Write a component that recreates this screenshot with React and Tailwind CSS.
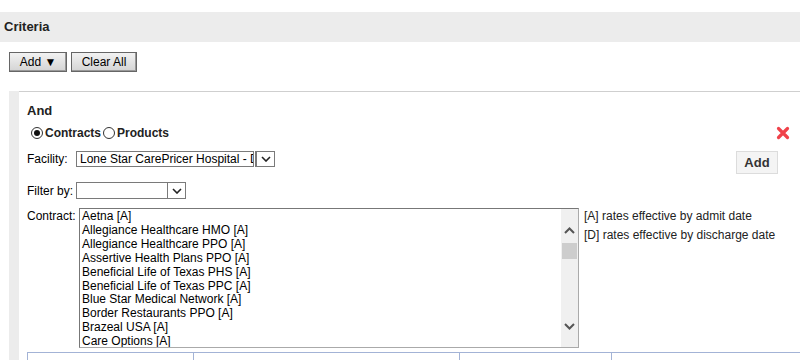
import { useState } from 'react';

const contracts = [
    'Aetna [A]',
    'Allegiance Healthcare HMO [A]',
    'Allegiance Healthcare PPO [A]',
    'Assertive Health Plans PPO [A]',
    'Beneficial Life of Texas PHS [A]',
    'Beneficial Life of Texas PPC [A]',
    'Blue Star Medical Network [A]',
    'Border Restaurants PPO [A]',
    'Brazeal USA [A]',
    'Care Options [A]',
];

const Chevron = ({ up }) => (
    <svg width="11" height="7" viewBox="0 0 11 7">
        <path d={up ? 'M1 6 L5.5 1.5 L10 6' : 'M1 1 L5.5 5.5 L10 1'} fill="none" stroke="#555" strokeWidth="2" />
    </svg>
);

const SelectArrow = () => (
    <span className="w-[18px] h-full border-l border-[#7a7a7a] flex items-center justify-center">
        <svg width="10" height="6" viewBox="0 0 10 6">
            <path d="M1 1 L5 5 L9 1" fill="none" stroke="#222" strokeWidth="1.6" />
        </svg>
    </span>
);

const Radio = ({ checked }) => (
    <span className="w-[12px] h-[12px] rounded-full border border-[#333] bg-white flex items-center justify-center">
        {checked && <span className="w-[6px] h-[6px] rounded-full bg-[#111]" />}
    </span>
);

const App = () => {
    const [mode, setMode] = useState('contracts');

    return (
        <div className="w-[800px] h-[360px] overflow-hidden bg-white text-[12px] text-black" style={{ fontFamily: '"Liberation Sans", Arial, sans-serif' }}>
            {/* Header */}
            <div className="pt-[12px]">
                <div className="h-[30px] bg-[#ececec] flex items-center pl-[4px]">
                    <span className="text-[13px] font-bold text-[#222]">Criteria</span>
                </div>
            </div>

            {/* Toolbar */}
            <div className="flex gap-[4px] pl-[9px] pt-[10px] h-[49px]">
                <button className="w-[58px] h-[20px] border border-[#666] bg-gradient-to-b from-[#f2f2f2] to-[#d4d4d4] text-[12px] leading-none shadow-[inset_-1px_-1px_0_#999]">
                    Add ▼
                </button>
                <button className="w-[66px] h-[20px] border border-[#666] bg-gradient-to-b from-[#f2f2f2] to-[#d4d4d4] text-[12px] leading-none shadow-[inset_-1px_-1px_0_#999]">
                    Clear All
                </button>
            </div>

            {/* Criteria panel */}
            <div className="flex pl-[9px]">
                <div className="w-[10px] h-[270px] bg-[#ececec] shrink-0" />
                <div className="flex-1 border-t border-[#cfcfcf] pl-[8px] pt-[11px] relative">
                    <div className="text-[13px] font-bold text-[#222] leading-[16px]">And</div>

                    <div className="flex items-center h-[18px] mt-[5px] pl-[4px] font-bold text-[#222]">
                        <label className="flex items-center gap-[2px] cursor-pointer" onClick={() => setMode('contracts')}>
                            <Radio checked={mode === 'contracts'} />
                            <span>Contracts</span>
                        </label>
                        <label className="flex items-center gap-[2px] ml-[2px] cursor-pointer" onClick={() => setMode('products')}>
                            <Radio checked={mode === 'products'} />
                            <span>Products</span>
                        </label>
                    </div>

                    {/* delete */}
                    <svg className="absolute right-[10px] top-[34px]" width="14" height="14" viewBox="0 0 14 14">
                        <path d="M2.5 2.5 L11.5 11.5 M11.5 2.5 L2.5 11.5" stroke="#f0424a" strokeWidth="3.2" strokeLinecap="round" />
                    </svg>

                    {/* Facility */}
                    <div className="flex items-start mt-[9px] h-[23px]">
                        <span className="w-[49px] leading-[16px]">Facility:</span>
                        <div className="flex items-center">
                            <div className="w-[178px] h-[16px] border border-[#7a7a7a] px-[3px] leading-[14px] overflow-hidden whitespace-nowrap">
                                Lone Star CarePricer Hospital - D
                            </div>
                            <div className="h-[16px] ml-[1px] border border-[#7a7a7a] flex">
                                <SelectArrow />
                            </div>
                        </div>
                        <button className="ml-auto mr-[22px] w-[42px] h-[23px] bg-[#f4f4f4] border border-[#dcdcdc] text-[13px] font-bold text-[#333]">
                            Add
                        </button>
                    </div>

                    {/* Filter by */}
                    <div className="flex items-center mt-[8px] h-[17px]">
                        <span className="w-[49px]">Filter by:</span>
                        <div className="w-[110px] h-[17px] border border-[#7a7a7a] flex justify-end">
                            <SelectArrow />
                        </div>
                    </div>

                    {/* Contract */}
                    <div className="flex mt-[9px]">
                        <span className="w-[52px] leading-[14px] pt-[1px]">Contract:</span>
                        <div className="w-[500px] h-[140px] border border-[#aaa] border-t-[#777] border-l-[#777] flex overflow-hidden">
                            <div className="flex-1 pl-[2px] pt-[1px]">
                                {contracts.map((c) => (
                                    <div key={c} className="leading-[13.9px] whitespace-nowrap">{c}</div>
                                ))}
                            </div>
                            <div className="w-[17px] bg-[#f0f0f0] flex flex-col items-center">
                                <div className="h-[14px]" />
                                <div className="h-[14px] flex items-center"><Chevron up /></div>
                                <div className="w-[15px] h-[16px] bg-[#cdcdcd] mt-[6px]" />
                                <div className="flex-1" />
                                <div className="h-[14px] flex items-center mb-[14px]"><Chevron /></div>
                            </div>
                        </div>
                        <div className="pl-[5px] leading-[14px] pt-[1px] text-[#222]">
                            <div>[A] rates effective by admit date</div>
                            <div className="mt-[5px]">[D] rates effective by discharge date</div>
                        </div>
                    </div>

                    {/* Table header start */}
                    <div className="mt-[4px] h-[20px] border-t border-l border-[#a3b3d6] flex">
                        <div className="w-[166px] border-r border-[#a3b3d6]" />
                        <div className="w-[266px] border-r border-[#a3b3d6]" />
                        <div className="w-[152px] border-r border-[#a3b3d6]" />
                        <div className="flex-1" />
                    </div>
                </div>
            </div>
        </div>
    );
};

export default App;
